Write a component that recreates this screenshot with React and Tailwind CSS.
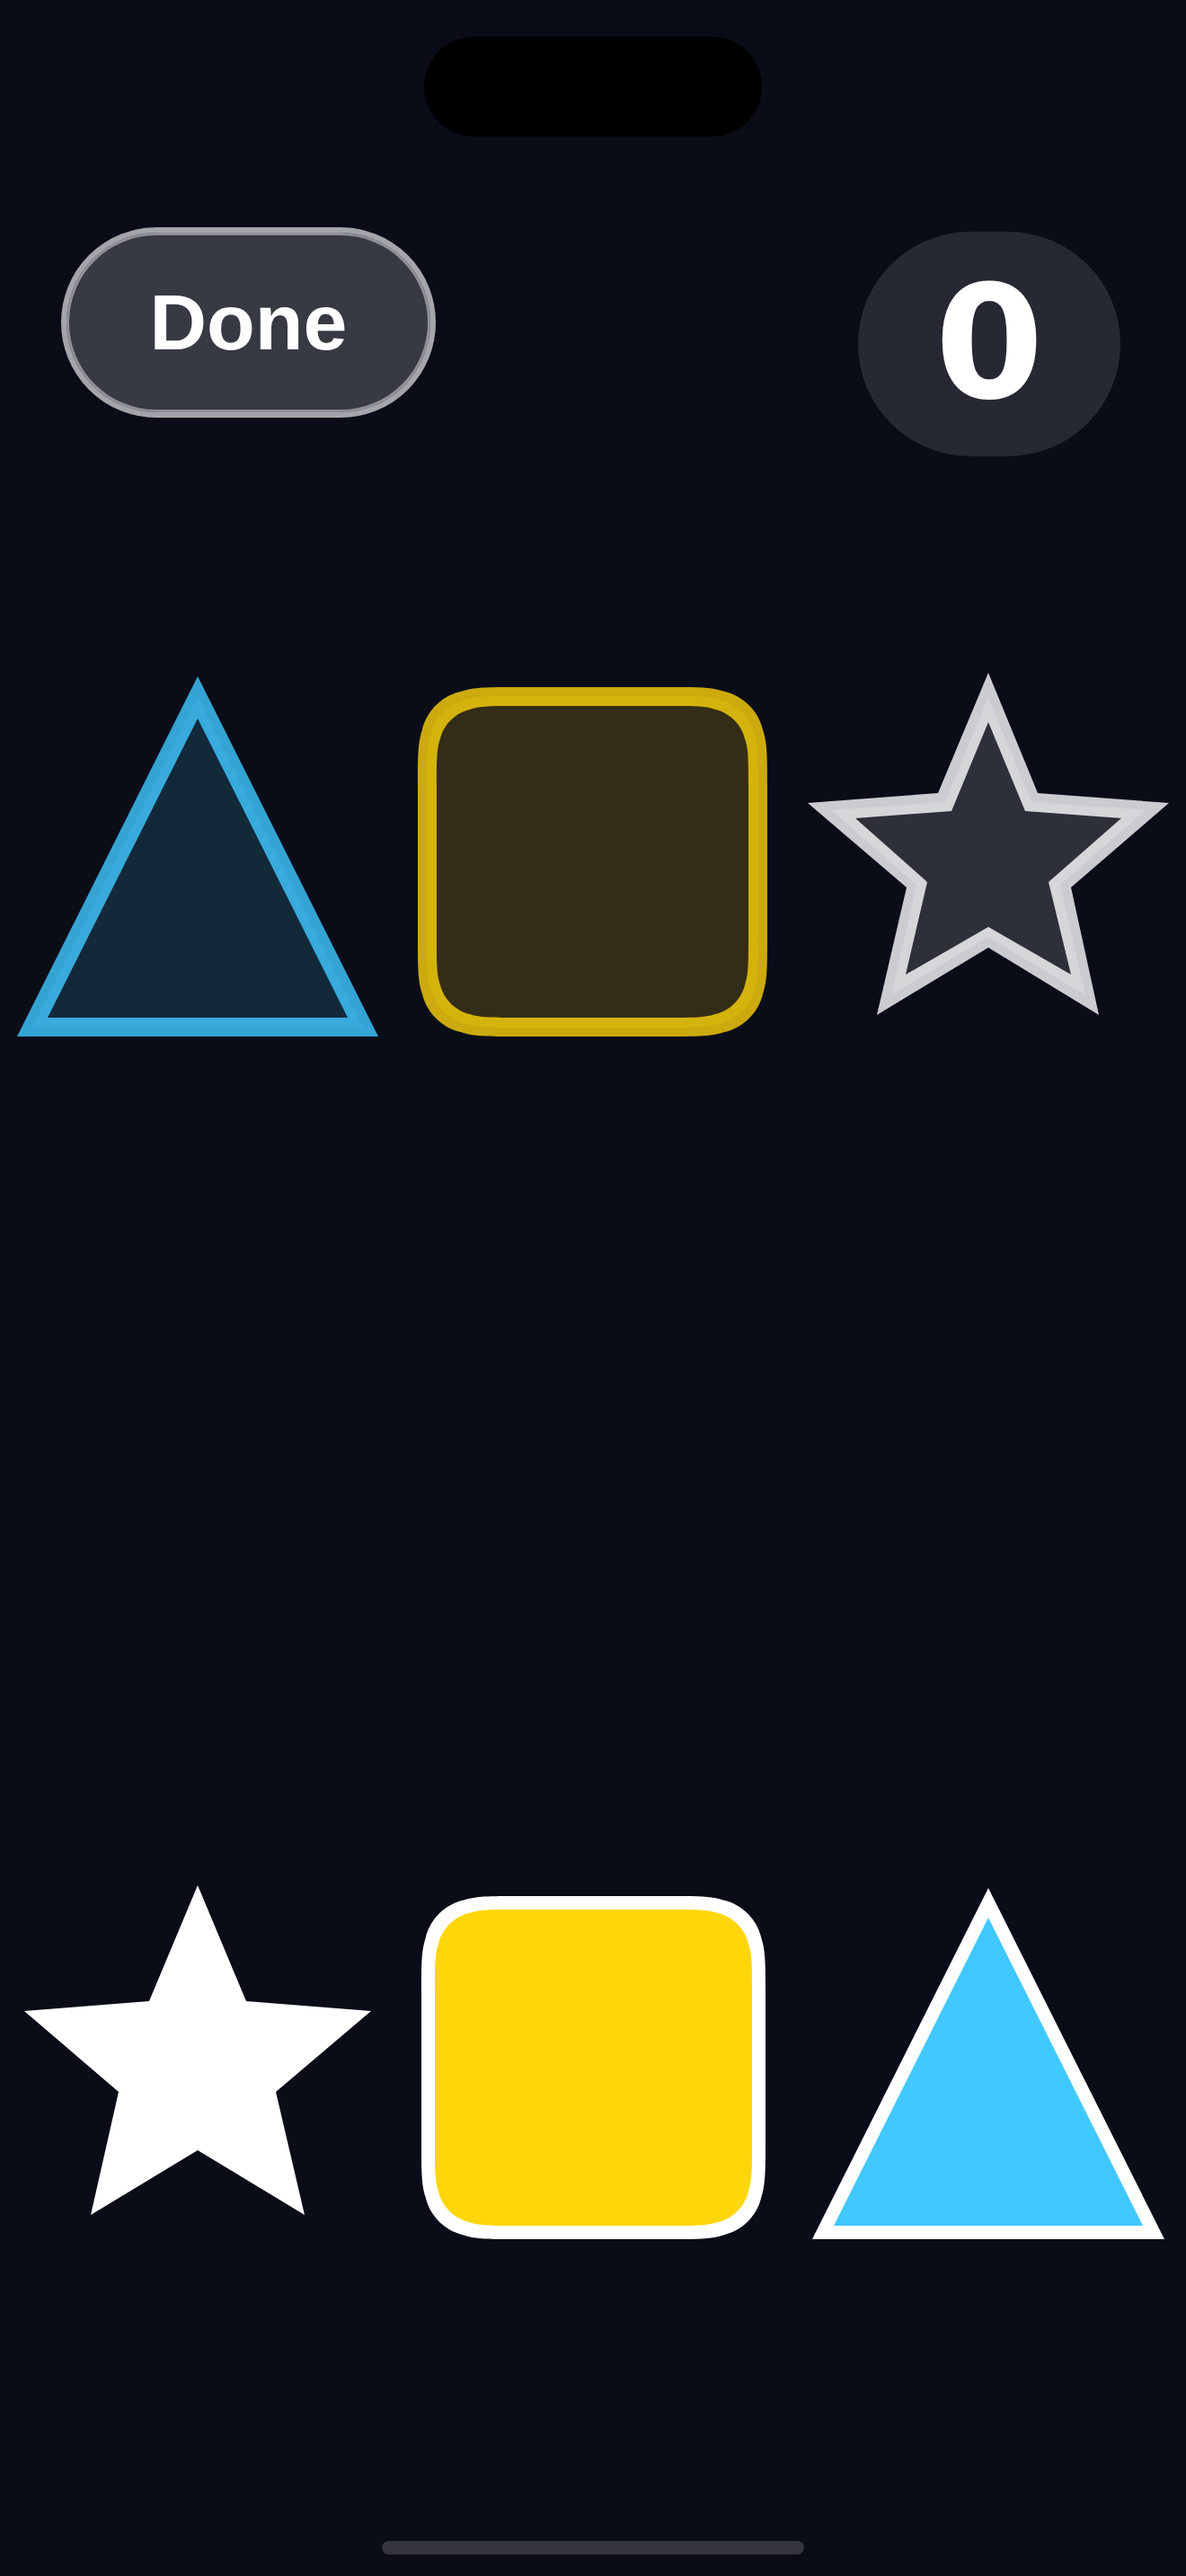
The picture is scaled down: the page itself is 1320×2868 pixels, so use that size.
const COL = "w-[440px] shrink-0";

function pts(list) {
  return list.map((p) => p.join(",")).join(" ");
}

// continuous (squircle) rounded rect, like iOS .continuous corners
function squircle(x, y, w, h, r) {
  const k = [1.52866, 1.08849, 0.86841, 0.66993, 0.0655, 0.37143, 0.13185];
  const [a, b, c, d, e, f, g] = k.map((v) => v * r);
  const R = x + w;
  const B = y + h;
  return [
    `M ${x + a} ${y}`,
    `L ${R - a} ${y}`,
    `C ${R - b} ${y} ${R - c} ${y} ${R - d} ${y + e}`,
    `C ${R - f} ${y + g} ${R - g} ${y + f} ${R - e} ${y + d}`,
    `C ${R} ${y + c} ${R} ${y + b} ${R} ${y + a}`,
    `L ${R} ${B - a}`,
    `C ${R} ${B - b} ${R} ${B - c} ${R - e} ${B - d}`,
    `C ${R - g} ${B - f} ${R - f} ${B - g} ${R - d} ${B - e}`,
    `C ${R - c} ${B} ${R - b} ${B} ${R - a} ${B}`,
    `L ${x + a} ${B}`,
    `C ${x + b} ${B} ${x + c} ${B} ${x + d} ${B - e}`,
    `C ${x + f} ${B - g} ${x + g} ${B - f} ${x + e} ${B - d}`,
    `C ${x} ${B - c} ${x} ${B - b} ${x} ${B - a}`,
    `L ${x} ${y + a}`,
    `C ${x} ${y + b} ${x} ${y + c} ${x + e} ${y + d}`,
    `C ${x + g} ${y + f} ${x + f} ${y + g} ${x + d} ${y + e}`,
    `C ${x + c} ${y} ${x + b} ${y} ${x + a} ${y}`,
    "Z",
  ].join(" ");
}

// row 1 (targets)
const tri1 = {
  outer: [[220, 13], [19, 414], [421, 414]],
  mid: [[220, 36], [36, 404], [404, 404]],
  inner: [[220, 60], [53, 393], [387, 393]],
};

const star1 = {
  outer: [[220, 9], [275, 143], [421, 154], [312, 248], [343, 390], [220, 315], [96, 390], [129, 248], [19, 154], [164, 143]],
  mid: [[220, 36], [268, 153], [395, 162], [300, 245], [328, 368], [220, 303], [112, 368], [140, 245], [45, 162], [172, 153]],
  inner: [[220, 64], [261, 163], [368, 171], [287, 242], [312, 345], [220, 292], [128, 345], [152, 242], [72, 171], [179, 163]],
};

// row 2 (pieces)
const star2 = [[220, 9], [274, 138], [413, 149], [307, 239], [339, 376], [220, 304], [101, 376], [132, 239], [27, 149], [166, 138]];

const tri2 = {
  outer: [[220, 12], [24, 403], [416, 403]],
  inner: [[220, 45], [48, 388], [392, 388]],
};

function GhostTriangle() {
  return (
    <svg width="440" height="430" viewBox="0 0 440 430" className={COL}>
      <polygon points={pts(tri1.outer)} fill="#35a4d4" />
      <polygon points={pts(tri1.mid)} fill="#38aadb" />
      <polygon points={pts(tri1.inner)} fill="#12293a" />
    </svg>
  );
}

function GhostSquare() {
  return (
    <svg width="440" height="430" viewBox="0 0 440 430" className={COL}>
      <path d={squircle(25, 25, 389, 389, 72)} fill="#ccaa0e" />
      <path d={squircle(35, 35, 369, 369, 64)} fill="#d4b30c" />
      <path d={squircle(46, 46, 347, 347, 56)} fill="#332d17" />
    </svg>
  );
}

function GhostStar() {
  return (
    <svg width="440" height="430" viewBox="0 0 440 430" className={COL}>
      <polygon points={pts(star1.outer)} fill="#cbccd0" />
      <polygon points={pts(star1.mid)} fill="#d5d6d8" />
      <polygon points={pts(star1.inner)} fill="#2e3039" />
    </svg>
  );
}

function PieceStar() {
  return (
    <svg width="440" height="410" viewBox="0 0 440 410" className={COL}>
      <polygon points={pts(star2)} fill="#ffffff" />
    </svg>
  );
}

function PieceSquare() {
  return (
    <svg width="440" height="410" viewBox="0 0 440 410" className={COL}>
      <path d={squircle(29, 21, 383, 382, 70)} fill="#ffffff" />
      <path d={squircle(44, 36, 353, 352, 58)} fill="#ffd60a" />
    </svg>
  );
}

function PieceTriangle() {
  return (
    <svg width="440" height="410" viewBox="0 0 440 410" className={COL}>
      <polygon points={pts(tri2.outer)} fill="#ffffff" />
      <polygon points={pts(tri2.inner)} fill="#40c8ff" />
    </svg>
  );
}

export default function App() {
  return (
    <div className="flex h-[2868px] w-[1320px] flex-col overflow-hidden bg-[#0a0d18]">
      {/* island */}
      <div className="mx-auto mt-[41px] h-[111px] w-[376px] rounded-full bg-black" />

      {/* header */}
      <div className="mt-[101px] flex items-start justify-between pl-[68px] pr-[73px]">
        <button className="flex h-[212px] w-[417px] items-center justify-center rounded-full border-[6px] border-[#a4a5aa] bg-[#373943] shadow-[inset_0_0_0_3px_#8e9096]">
          <span className="font-['Liberation_Sans',Arial,sans-serif] text-[88px] font-bold leading-none text-white">
            Done
          </span>
        </button>
        <div className="mt-[5px] flex h-[250px] w-[292px] items-center justify-center rounded-full bg-[#262833]">
          <span className="font-['DejaVu_Sans',sans-serif] text-[174px] font-bold leading-none text-white">
            0
          </span>
        </div>
      </div>

      {/* targets */}
      <div className="mt-[232px] flex">
        <GhostTriangle />
        <GhostSquare />
        <GhostStar />
      </div>

      {/* pieces */}
      <div className="mt-[920px] flex">
        <PieceStar />
        <PieceSquare />
        <PieceTriangle />
      </div>

      {/* home indicator */}
      <div className="mx-auto mt-[329px] h-[15px] w-[470px] rounded-full bg-[#35363d]" />
    </div>
  );
}
